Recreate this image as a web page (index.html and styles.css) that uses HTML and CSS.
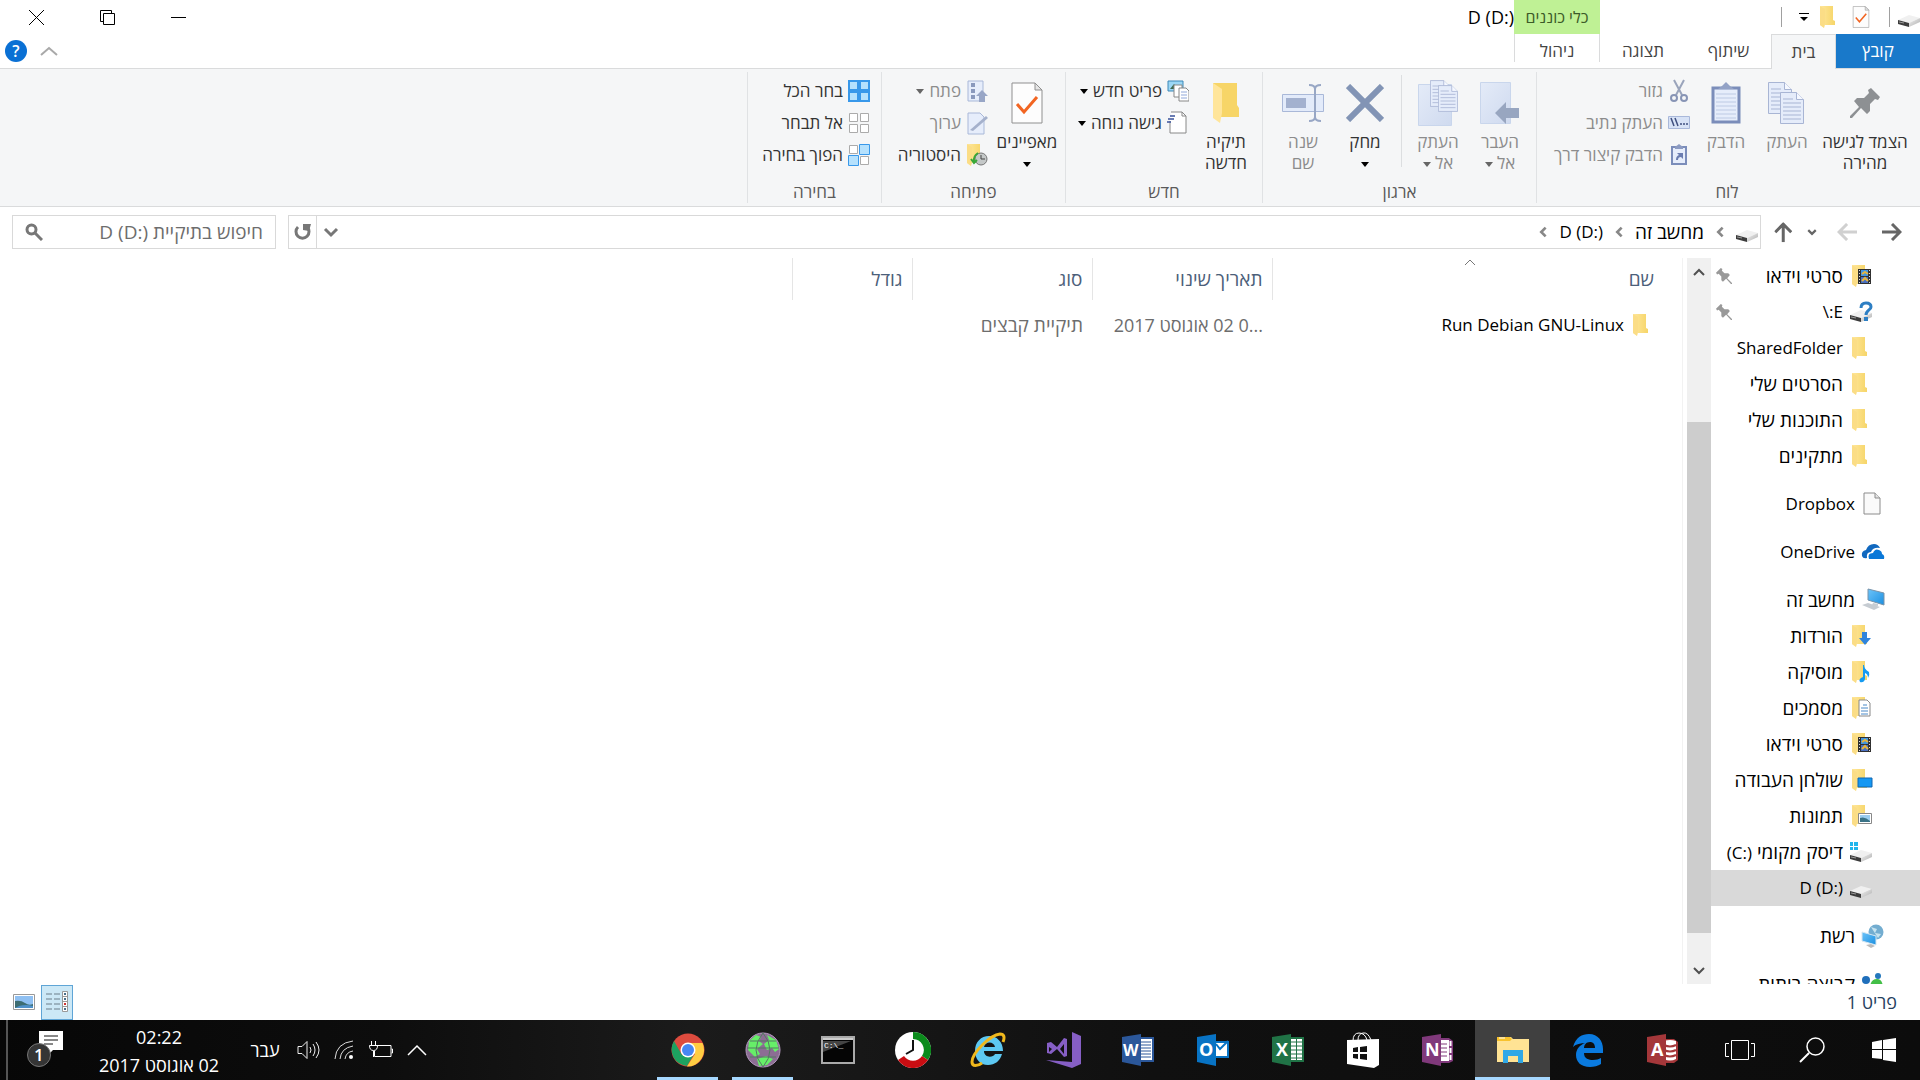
FILE: index.html
```html
<!DOCTYPE html>
<html lang="he" dir="rtl">
<head>
<meta charset="utf-8">
<title>D (D:)</title>
<link rel="stylesheet" href="styles.css">
</head>
<body>
<svg class="defs" aria-hidden="true">
  <defs>
    <linearGradient id="gf" x1="0" y1="0" x2="1" y2="0"><stop offset="0" stop-color="#ffe79c"/><stop offset="1" stop-color="#f6d568"/></linearGradient>
    <linearGradient id="gd" x1="0" y1="0" x2="1" y2="1"><stop offset="0" stop-color="#f2f2f2"/><stop offset="1" stop-color="#aeaeae"/></linearGradient>
    <linearGradient id="gl" x1="0" y1="0" x2="1" y2="1"><stop offset="0" stop-color="#e4ebf8"/><stop offset="1" stop-color="#cfdaef"/></linearGradient>
    <linearGradient id="gs" x1="0" y1="0" x2="1" y2="1"><stop offset="0" stop-color="#6cc4fa"/><stop offset="1" stop-color="#1c8fe0"/></linearGradient>
  </defs>
  <symbol id="folder" viewBox="0 0 24 24"><path d="M3 1h13v14l2 1v4H5z" fill="url(#gf)"/><path d="M3 1l5 4v13l-1 5-4-3z" fill="#fff0be"/><path d="M3 1l5 3v15l-1 4-4-3z" fill="#fbdd86"/></symbol>
  <symbol id="drive" viewBox="0 0 24 24"><path d="M1 15l11-5 11 3-11 5z" fill="#f0f0f0"/><path d="M12 18l11-5v4l-11 5z" fill="url(#gd)"/><path d="M1 15l11 3v4L1 19z" fill="#3c3c3c"/><path d="M2 17l5 1" stroke="#999"/></symbol>
  <symbol id="doc" viewBox="0 0 24 24"><path d="M3 1h11l5 5v16H3z" fill="#fafafa" stroke="#8c8c8c"/><path d="M14 1v5h5" fill="#e4e4e4" stroke="#8c8c8c"/></symbol>
  <symbol id="checkdoc" viewBox="0 0 32 42"><path d="M1 1h23l7 7v33H1z" fill="#fdfdfd" stroke="#8f8f8f"/><path d="M24 1v7h7z" fill="#e6e6e6" stroke="#8f8f8f"/><path d="M6 22l7 8 13-15" fill="none" stroke="#f26522" stroke-width="3"/></symbol>
  <symbol id="pin" viewBox="0 0 30 30"><path d="M21 0l9 9-2 3-3-1-5 5v7l-3 3-6-6L2 30l-2 0v-2l9-9-5-6 3-3h7l5-5-1-3z"/></symbol>
  <symbol id="page" viewBox="0 0 24 32"><path d="M.5.500h16l7 7v24h-23z" fill="#e5ecfa" stroke="#a8b5d4"/><path d="M16.500.5v7h7" fill="#f5f8ff" stroke="#a8b5d4"/><path d="M3 11h18M3 15h18M3 19h18M3 23h18M3 27h18M3 7h10" stroke="#a8b5d4"/></symbol>
  <symbol id="film" viewBox="0 0 24 24"><use href="#folder"/><path d="M9 5h13v15H9z" fill="#303030"/><path d="M12 6h7v6h-7z" fill="#4295df"/><path d="M12 13h7v6h-7z" fill="#496fc0"/><path d="M13 10l3-2 3 2M13 17l3-3 3 3" stroke="#e6b53d" fill="none" stroke-width="2"/><path d="M10.500 6v14M20.500 6v14" stroke="#ddd" stroke-dasharray="1 2"/></symbol>
  <symbol id="chev" viewBox="0 0 16 16"><path d="M3 5.500l5 5 5-5" fill="none" stroke="currentColor" stroke-width="3"/></symbol>
  <symbol id="chevl" viewBox="0 0 16 16"><path d="M11 3L6 8l5 5" fill="none" stroke="currentColor" stroke-width="3"/></symbol>
  <symbol id="tri" viewBox="0 0 8 5"><path d="M0 0h8L4 5z" fill="currentColor"/></symbol>
  <symbol id="arrow" viewBox="0 0 20 18"><path d="M0 9h18M10 1l8 8-8 8" fill="none" stroke="currentColor" stroke-width="3"/></symbol>
  <symbol id="sq" viewBox="0 0 22 22"><path d="M1 1h9v9H1zM12 1h9v9h-9zM1 12h9v9H1zM12 12h9v9h-9z"/></symbol>
</svg>

<header class="titlebar">
  <svg class="i24 cut"><use href="#drive"/></svg>
  <span class="tsep"></span>
  <button class="quick q1" aria-label="מאפיינים"><svg width="18" height="22"><use href="#checkdoc"/></svg></button>
  <button class="quick q2" aria-label="תיקיה חדשה"><svg class="i24"><use href="#folder"/></svg></button>
  <button class="quick q3" aria-label="התאמה אישית"><svg width="10" height="9" viewBox="0 0 10 9"><path d="M0 0h10v1H0zM1 4h8L5 8z"/></svg></button>
  <span class="tsep"></span>
  <span class="tool-tab">כלי כוננים</span>
  <h1 dir="ltr">D (D:)</h1>
  <div class="wincontrols">
    <button aria-label="מזער"><svg width="15" height="15"><path d="M0 7.500h15" stroke="#000"/></svg></button>
    <button aria-label="שחזר"><svg width="15" height="15"><path d="M3.500 3.500h11v11h-11zM3.500 11.500h-3V.500h11v3" fill="none" stroke="#000"/></svg></button>
    <button aria-label="סגור"><svg width="15" height="15"><path d="M0 0l15 15M15 0L0 15" stroke="#000"/></svg></button>
  </div>
</header>

<nav class="tabs">
  <button class="tab file">קובץ</button>
  <button class="tab home">בית</button>
  <button class="tab share">שיתוף</button>
  <button class="tab">תצוגה</button>
  <button class="tab manage">ניהול</button>
  <div class="tabtools">
    <button aria-label="מזער רצועת כלים"><svg width="18" height="10"><path d="M1 9l8-7 8 7" fill="none" stroke="#a9a9a9" stroke-width="2"/></svg></button>
    <button class="help" aria-label="עזרה">?</button>
  </div>
</nav>

<section class="ribbon">
  <div class="group clip">
    <div class="tools">
      <button class="big wide"><span class="pic"><svg width="30" height="30" fill="#8d9093"><use href="#pin"/></svg></span>הצמד לגישה<br>מהירה</button>
      <button class="big off"><span class="pic"><svg width="38" height="42"><use href="#page" width="24" height="32"/><use href="#page" x="12" y="10" width="24" height="32"/></svg></span>העתק</button>
      <button class="big off slim"><span class="pic"><svg width="30" height="43"><path d="M2 6h26v34H2z" fill="#e6edfb" stroke="#7b8dba" stroke-width="3"/><path d="M7 7l4-3 4-4 4 4 4 3z" fill="#93a2c6"/><path d="M5 12h20M5 16h20M5 20h20M5 24h20M5 28h20M5 32h20M5 36h20" stroke="#bdcae4"/></svg></span>הדבק</button>
      <div class="stack">
        <button class="small off"><svg width="22" height="24"><path d="M6 1l8 15M16 1L8 16" stroke="#9aa4bb" stroke-width="2"/><circle cx="6" cy="19" r="3" fill="none" stroke="#8794b5" stroke-width="2"/><circle cx="16" cy="19" r="3" fill="none" stroke="#8794b5" stroke-width="2"/></svg>גזור</button>
        <button class="small off"><svg width="22" height="24"><path d="M.500 5.500h21v12H.500z" fill="#d7e2f6" stroke="#a9b8da"/><path d="M3 7l3 8M7 7l3 8M12 13h2M15 13h2M18 13h2" stroke="#405080" stroke-width="1.500"/></svg>העתק נתיב</button>
        <button class="small off"><svg width="22" height="24"><path d="M4 4h14v17H4z" fill="#e6edfb" stroke="#7b8dba" stroke-width="2"/><path d="M7 4l4-3 4 3v2H7z" fill="#8c9bc2"/><path d="M8 17c0-3 1-4 3-5l-2-2h6v6l-2-2c-2 0-3 1-3 3z" fill="#6b7db0"/></svg>הדבק קיצור דרך</button>
      </div>
    </div>
    <h2>לוח</h2>
  </div>
  <div class="group org">
    <div class="tools">
      <button class="big off"><span class="pic"><svg width="40" height="44"><path d="M.500 1.500h30v41H.500z" fill="url(#gl)" stroke="#c9d6ec"/><path d="M15 32l11-11v6h13v10H26v6z" fill="#98a6c0"/></svg></span>העבר<br>אל <svg class="tri"><use href="#tri"/></svg></button>
      <button class="big off"><span class="pic"><svg width="40" height="46"><path d="M.500 4.500h33v41H.500z" fill="url(#gl)" stroke="#c9d6ec"/><use href="#page" x="12" y="0" width="20" height="27"/><use href="#page" x="20" y="5" width="20" height="27"/></svg></span>העתק<br>אל <svg class="tri"><use href="#tri"/></svg></button>
      <span class="rsep"></span>
      <button class="big"><span class="pic"><svg width="38" height="38"><path d="M2 2l34 34M36 2L2 36" stroke="#8294b5" stroke-width="6"/></svg></span>מחק<br><svg class="tri"><use href="#tri"/></svg></button>
      <button class="big off"><span class="pic"><svg width="42" height="38"><path d="M.500 10.500h41v17H.500z" fill="#e3ebfa" stroke="#a9b8d8"/><path d="M4 14h20v10H4z" fill="#a3b1cf"/><path d="M27 1q6 0 6 4v28q0 4-6 4M39 1q-6 0-6 4v28q0 4 6 4" fill="none" stroke="#98a7c5" stroke-width="2"/></svg></span>שנה<br>שם</button>
    </div>
    <h2>ארגון</h2>
  </div>
  <div class="group new">
    <div class="tools">
      <button class="big"><span class="pic"><svg width="28" height="40"><path d="M1 0h24v22l2 3v9H5z" fill="#f7d567"/><path d="M1 0l9 6v24l-2 10-7-5z" fill="#ffe59a"/></svg></span>תיקיה<br>חדשה</button>
      <div class="stack">
        <button class="small"><svg width="22" height="24"><path d="M1 2h15v10H1z" fill="#9bd7f5" stroke="#3c88b8"/><path d="M3 10l4-5 4 5z" fill="#406a50"/><path d="M7 6h8v12H7z" fill="#fff" stroke="#888"/><path d="M12 9h7l3 3v10H12z" fill="#fff" stroke="#888"/><path d="M14 13h6M14 16h6M14 19h6" stroke="#91a8da"/></svg>פריט חדש <svg class="tri"><use href="#tri"/></svg></button>
        <button class="small"><svg width="22" height="24"><path d="M4 1h11l4 4v17H3V10" fill="#fff" stroke="#888"/><path d="M15 1v4h4" fill="none" stroke="#888"/><path d="M3 5h5M1 8h6M0 11h4" stroke="#3b539c" stroke-width="1.500"/></svg>גישה נוחה <svg class="tri"><use href="#tri"/></svg></button>
      </div>
    </div>
    <h2>חדש</h2>
  </div>
  <div class="group open">
    <div class="tools">
      <button class="big props"><span class="pic"><svg width="32" height="42"><use href="#checkdoc"/></svg></span>מאפיינים<br><svg class="tri"><use href="#tri"/></svg></button>
      <div class="stack">
        <button class="small off"><svg width="22" height="24"><path d="M2 2h15v20H2z" fill="#e6edfb" stroke="#a9b8d8"/><path d="M5 4h4v4H5zM5 10h4v4H5zM5 16h4v4H5z" fill="#8a99bd"/><path d="M16 11l6 6h-3v6h-6v-6h-3z" fill="#98a6c6"/></svg>פתח <svg class="tri"><use href="#tri"/></svg></button>
        <button class="small off"><svg width="22" height="24"><path d="M2 2h12l4 4v17H2z" fill="#e6edfb" stroke="#a9b8d8"/><path d="M4 19L20 5l2 2L7 20z" fill="#a5b1cc"/></svg>ערוך</button>
        <button class="small"><svg width="22" height="24"><use href="#folder" width="24" height="24" x="-2"/><circle cx="15" cy="16" r="6" fill="#c4c8c8" stroke="#777"/><path d="M15 12v4h4" fill="none" stroke="#444"/><path d="M12 10q-5 3-4 9M5 16l3 4 3-3" stroke="#38a838" stroke-width="2" fill="none"/></svg>היסטוריה</button>
      </div>
    </div>
    <h2>פתיחה</h2>
  </div>
  <div class="group select">
    <div class="tools">
      <div class="stack">
        <button class="small"><svg width="22" height="22" fill="#b5e1fd" stroke="#3898ea" stroke-width="2"><use href="#sq"/></svg>בחר הכל</button>
        <button class="small"><svg width="22" height="22"><path d="M1.500 1.500h8v8h-8zM12.500 1.500h8v8h-8zM1.500 12.500h8v8h-8zM12.500 12.500h8v8h-8z" fill="#fff" stroke="#ababab"/></svg>אל תבחר</button>
        <button class="small"><svg width="22" height="22"><path d="M1.500 1.500h8v8h-8zM12.500 12.500h8v8h-8z" fill="#fff" stroke="#ababab"/><path d="M11.500.500h10v10h-10zM.500 11.500h10v10H.500z" fill="#b5e1fd" stroke="#3898ea"/></svg>הפוך בחירה</button>
      </div>
    </div>
    <h2>בחירה</h2>
  </div>
</section>

<div class="addressbar">
  <div class="navbtns">
    <button aria-label="הקודם" class="fwd"><svg width="20" height="18"><use href="#arrow"/></svg></button>
    <button aria-label="הבא" class="back"><svg width="20" height="18"><use href="#arrow"/></svg></button>
    <button aria-label="מיקומים אחרונים" class="recent"><svg width="12" height="12"><use href="#chev"/></svg></button>
    <button aria-label="למעלה" class="up"><svg width="20" height="18"><use href="#arrow"/></svg></button>
  </div>
  <div class="path">
    <svg class="i24"><use href="#drive"/></svg>
    <svg class="pc"><use href="#chevl"/></svg>
    <a href="#">מחשב זה</a>
    <svg class="pc"><use href="#chevl"/></svg>
    <a class="latin" href="#" dir="ltr">D (D:)</a>
    <svg class="pc"><use href="#chevl"/></svg>
    <span class="grow"></span>
    <button class="drop" aria-label="היסטוריית מיקומים"><svg width="18" height="18"><path d="M3 6l6 6 6-6" fill="none" stroke="#777" stroke-width="3"/></svg></button>
    <button class="refresh" aria-label="רענן"><svg width="18" height="18"><path d="M4 4a6.500 6.500 0 1 0 9 0" fill="none" stroke="#777" stroke-width="3"/><path d="M9 1h8l-2 7-6-1z" fill="#777"/></svg></button>
  </div>
  <div class="search">
    <input type="search" aria-label="חיפוש" placeholder="חיפוש בתיקיית D (D:)&#8206;">
    <svg width="18" height="18"><circle cx="6.500" cy="6.500" r="4.500" fill="none" stroke="#777" stroke-width="3"/><path d="M10 10l7 7" stroke="#777" stroke-width="3"/></svg>
  </div>
</div>

<main>
  <nav class="tree">
    <ul>
      <li><a class="kid" href="#"><svg><use href="#film"/></svg>סרטי וידאו<svg class="pinned"><use href="#pin"/></svg></a></li>
      <li><a class="kid latin" href="#"><svg viewBox="0 0 24 24"><use href="#drive"/><path d="M12 8q0-5 5-5t5 4c0 3-5 3-5 8" fill="none" stroke="#2d7fc4" stroke-width="3"/><path d="M15 17h4v4h-4z" fill="#2d7fc4"/></svg>E:\<svg class="pinned"><use href="#pin"/></svg></a></li>
      <li><a class="kid latin" href="#"><svg><use href="#folder"/></svg>SharedFolder</a></li>
      <li><a class="kid" href="#"><svg><use href="#folder"/></svg>הסרטים שלי</a></li>
      <li><a class="kid" href="#"><svg><use href="#folder"/></svg>התוכנות שלי</a></li>
      <li><a class="kid" href="#"><svg><use href="#folder"/></svg>מתקינים</a></li>
    </ul>
    <ul><li><a class="latin" href="#"><svg><use href="#doc"/></svg>Dropbox</a></li></ul>
    <ul><li><a class="latin" href="#"><svg viewBox="0 0 24 24"><path d="M1 16q-1-5 4-6 2-6 8-6 4 0 6 4-7-1-9 4-5 0-4 6-4 1-5-2z" fill="#1068bf"/><path d="M8 19q-2-6 4-6 2-5 6-3 3 1 3 4 3 1 2 5z" fill="#0a78d8"/></svg>OneDrive</a></li></ul>
    <ul>
      <li><a href="#"><svg viewBox="0 0 24 24"><path d="M7 1l16 4v12L7 12z" fill="url(#gs)" stroke="#7893aa"/><path d="M12 15l5 1v2l-6-1zM1 17l6-2 12 4-6 3z" fill="#c6ccd2"/></svg>מחשב זה</a></li>
      <li><a class="kid" href="#"><svg viewBox="0 0 24 24"><use href="#folder"/><path d="M13 8h5v6h4l-6 7-6-7h3z" fill="#2f84dc"/></svg>הורדות</a></li>
      <li><a class="kid" href="#"><svg viewBox="0 0 24 24"><use href="#folder"/><path d="M15 5q0 4 5 7 1 3-1 6 0-4-3-5v6q-1 4-5 3-2-3 3-5V5z" fill="#159bf1"/></svg>מוסיקה</a></li>
      <li><a class="kid" href="#"><svg viewBox="0 0 24 24"><use href="#folder"/><path d="M10 4h8l3 3v13H10z" fill="#fff" stroke="#888"/><path d="M12 12h7M12 15h7M12 18h7M14 9h4" stroke="#4a8ac8"/></svg>מסמכים</a></li>
      <li><a class="kid" href="#"><svg><use href="#film"/></svg>סרטי וידאו</a></li>
      <li><a class="kid" href="#"><svg viewBox="0 0 24 24"><use href="#folder"/><path d="M9 10h14v9H9z" fill="#1598f3" stroke="#1166b1"/></svg>שולחן העבודה</a></li>
      <li><a class="kid" href="#"><svg viewBox="0 0 24 24"><use href="#folder"/><path d="M9.500 9.500h13v10h-13z" fill="#fff" stroke="#888"/><path d="M11 11h10v7H11z" fill="#9bcdf0"/><path d="M11 14q5-2 10 3v1H11z" fill="#397286"/></svg>תמונות</a></li>
      <li><a class="kid" href="#"><svg viewBox="0 0 24 24"><use href="#drive"/><path d="M1 2h3v4H1zM5 2h4v4H5zM1 7h3v3H1zM5 7h4v3H5z" fill="#21b5ec"/></svg><span>דיסק מקומי <bdi class="latin" dir="ltr">(C:)</bdi></span></a></li>
      <li><a class="kid latin current" href="#"><svg><use href="#drive"/></svg><bdi dir="ltr">D (D:)</bdi></a></li>
    </ul>
    <ul><li><a href="#"><svg viewBox="0 0 24 24"><circle cx="15" cy="8" r="7.500" fill="#73add0"/><path d="M10 3l6 2-2 4 6 1-3 4" fill="#c6e3ef"/><path d="M1 8l14 4v9L1 17z" fill="url(#gs)" stroke="#d4e6f2"/><path d="M5 21l5-1 4 2-4 2z" fill="#bbb"/></svg>רשת</a></li></ul>
    <ul><li><a href="#"><svg viewBox="0 0 24 24"><circle cx="5" cy="8" r="4" fill="#1f6fbb"/><circle cx="17" cy="4" r="3" fill="#2478bd"/><path d="M9 17q0-10 7-10 6 0 6 10z" fill="#43bf47"/></svg>קבוצה ביתית</a></li></ul>
  </nav>
  <div class="scroll">
    <button aria-label="גלול למעלה"><svg width="12" height="9"><path d="M1 8l5-5 5 5" fill="none" stroke="#505050" stroke-width="2"/></svg></button>
    <span class="before"></span><span class="thumb"></span><span class="after"></span>
    <button aria-label="גלול למטה"><svg width="12" height="9"><path d="M1 1l5 5 5-5" fill="none" stroke="#505050" stroke-width="2"/></svg></button>
  </div>
  <section class="files">
    <table>
      <thead><tr>
        <th class="c-name">שם<svg class="sort" width="12" height="7"><path d="M1 6l5-5 5 5" fill="none" stroke="#777"/></svg></th>
        <th class="c-date">תאריך שינוי</th><th class="c-type">סוג</th><th class="c-size">גודל</th><th></th>
      </tr></thead>
      <tbody><tr>
        <td><a class="entry latin" href="#"><svg class="i24"><use href="#folder"/></svg><span dir="ltr">Run Debian GNU-Linux</span></a></td>
        <td class="date">...0 02 אוגוסט 2017</td><td>תיקיית קבצים</td><td></td><td></td>
      </tr></tbody>
    </table>
  </section>
</main>

<div class="status">
  <span>פריט 1</span>
  <div class="views">
    <button class="on" aria-label="פרטים"><svg width="22" height="22"><path d="M0 3h6M8 3h6M0 8h6M8 8h6M0 13h6M8 13h6M0 18h6M8 18h6" stroke="#6c7f8a"/><path d="M16.500.500h5v20h-5zM16 5.500h5M16 10.500h5M16 15.500h5" stroke="#999" fill="#fff"/><path d="M18 2h2v2h-2zM18 7h2v2h-2zM18 17h2v2h-2z" fill="#46708c"/><path d="M18 12h2v2h-2z" fill="#c33"/></svg></button>
    <button aria-label="תמונות ממוזערות"><svg width="22" height="16"><path d="M.500.500h21v15H.500z" fill="#fff" stroke="#999"/><path d="M2 2h18v12H2z" fill="#8fc0f2"/><path d="M2 7q6-1 10 2t8 1v4H2z" fill="#3d6d72"/><path d="M6 12q7-2 14 0v2H2z" fill="#4f91c9"/></svg></button>
  </div>
</div>

<footer class="taskbar">
  <button class="sys" aria-label="התחל"><svg width="24" height="24"><path d="M0 4l10-2v9H0zM11 2l13-2v11H11zM0 12h10v9L0 20zM11 12h13v12l-13-2z" fill="#fff"/></svg></button>
  <button class="sys" aria-label="חיפוש"><svg width="26" height="26"><circle cx="16.500" cy="9.500" r="8.500" fill="none" stroke="#fff" stroke-width="1.500"/><path d="M10 16L1 25" stroke="#fff" stroke-width="2"/></svg></button>
  <button class="sys" aria-label="תצוגת משימות"><svg width="30" height="20"><path d="M6.500.500h17v19h-17zM4 3.500H.500v13H4M26 3.500h3.500v13H26" fill="none" stroke="#fff"/></svg></button>
  <div class="apps">
    <button class="app" aria-label="Access"><svg width="34" height="34"><path d="M16 6h12l4 3v18l-4 3H16z" fill="#a4373a"/><path d="M18 8q6-2 12 0v18q-6 3-12 0z" fill="#fff"/><path d="M18 12q6 3 12 0M18 17q6 3 12 0M18 22q6 3 12 0" stroke="#a4373a" stroke-width="2" fill="none"/><path d="M1 4l19-3v32L1 29z" fill="#a4373a"/><text x="5" y="23">A</text></svg></button>
    <button class="app" aria-label="Edge"><svg width="32" height="34"><path d="M1 14C4 4 10 1 17 1c9 0 14 7 14 15v4H12c0 6 5 7 9 7 3 0 6-1 8-2v6c-3 2-7 3-11 3-9 0-14-5-14-12 0-6 4-10 9-12-4 0-9 1-12 4zm11 1h11c0-4-2-6-5-6-4 0-6 3-6 6z" fill="#0a7adf"/></svg></button>
    <button class="app active" aria-label="סייר הקבצים"><svg width="32" height="28"><path d="M0 1h14l2 2h16v23H0z" fill="#ffe394"/><path d="M0 1h13l2 2-2 2H0z" fill="#f8c22c"/><path d="M2 2h6" stroke="#fff"/><path d="M6 14h20v13h-5v-7H11v7H6z" fill="#30a8e6"/></svg></button>
    <button class="app" aria-label="OneNote"><svg width="34" height="34"><path d="M16 5h12l4 3v20l-4 2H16z" fill="#80397b"/><path d="M20 7h8v21h-8z" fill="#fff"/><path d="M20 11h6M20 15h6M20 19h6M20 23h6" stroke="#80397b"/><path d="M29.500 8v5M29.500 15v5M29.500 22v5" stroke="#fff" stroke-width="2"/><path d="M1 4l19-3v32L1 29z" fill="#80397b"/><text x="4" y="23">N</text></svg></button>
    <button class="app" aria-label="חנות"><svg width="32" height="36"><path d="M0 8l32-1v26l-5 3-27-4z" fill="#fff"/><path d="M6 9q0-8 6-8t8 7M11 8q0-6 5-7t8 7" fill="none" stroke="#fff"/><path d="M6 16l5-1v5H6zM13 15l7-1v6h-7zM6 22h5v5l-5-1zM13 22h7v6l-7-1z" fill="#111"/></svg></button>
    <button class="app" aria-label="Excel"><svg width="34" height="34"><path d="M17 5h15v23H17z" fill="#fff" stroke="#207346" stroke-width="2"/><path d="M25.500 5v23M18 9h14M18 13h14M18 17h14M18 21h14M18 25h14" stroke="#207346"/><path d="M1 4l19-3v32L1 29z" fill="#207346"/><text x="5" y="23">X</text></svg></button>
    <button class="app" aria-label="Outlook"><svg width="34" height="34"><path d="M17 9h15v15H17z" fill="#fff" stroke="#0873c4" stroke-width="2"/><path d="M20 11l4 5 8-8" fill="none" stroke="#0873c4" stroke-width="2"/><path d="M1 4l19-3v32L1 29z" fill="#0873c4"/><text x="3" y="23">O</text></svg></button>
    <button class="app" aria-label="Word"><svg width="34" height="34"><path d="M17 5h15v23H17z" fill="#fff" stroke="#2b579a" stroke-width="2"/><path d="M20 9h10M20 12h10M20 15h10M20 18h10M20 21h10M20 24h10" stroke="#2b579a"/><path d="M1 4l19-3v32L1 29z" fill="#2b579a"/><text class="w" x="2" y="23">W</text></svg></button>
    <button class="app" aria-label="Visual Studio"><svg width="36" height="36"><path d="M27 0l9 4v28l-9 4L1 28l26 2z" fill="#865fc5"/><path fill-rule="evenodd" d="M2 11l4-1 6 5 7-9 3 1v17l-3 1-7-8-6 5-4-1V11zm2 4v5l3-3zm15-3l-4 5 4 5z" fill="#865fc5"/></svg></button>
    <button class="app" aria-label="Internet Explorer"><svg width="36" height="36"><path d="M19 4c8 0 14 6 14 15H14c0 7 9 7 11 3h7c-2 7-7 11-14 11C10 33 5 27 5 19 5 10 11 4 19 4zm-5 11h11c-1-6-10-6-11 0z" fill="#5dc8f2"/><path d="M33 10c2-5 1-8-3-8C20 3 2 21 2 30c0 5 6 4 10 1" fill="none" stroke="#f0b81c" stroke-width="3"/></svg></button>
    <button class="app" aria-label="שעון"><svg width="36" height="36"><circle cx="18" cy="18" r="18" fill="#fff"/><path d="M18 0a18 18 0 0 1 15 28l-6-4A11 11 0 0 0 18 7z" fill="#0a8b1b"/><path d="M3 28a18 18 0 0 0 30 0l-6-4a11 11 0 0 1-18 0z" fill="#c90d12"/><path d="M18 8v10l-7 4" fill="none" stroke="#111" stroke-width="2"/></svg></button>
    <button class="app" aria-label="שורת פקודה"><svg width="34" height="28"><path d="M1 1h32v26H1z" fill="#050505" stroke="#aaa" stroke-width="2"/><path d="M2 3h30" stroke="#ccc" stroke-width="2"/><path d="M2 5h28L2 16z" fill="#444"/><text class="cmd" x="3" y="12">C:\_</text></svg></button>
    <button class="app run" aria-label="דפדפן"><svg width="36" height="36"><circle cx="18" cy="18" r="17" fill="#8c6d94" stroke="#b69ac0"/><path d="M4 9l7-6 5 2-2 4 4 3-6 5 3 5-5 3-7-7zM22 3l9 5 3 9-4 3-3-4-5 2-3-6 5-4zM12 27l9-3 7 3-6 6-8 1z" fill="#66ef68"/><path d="M2 16h32M5 9h26M5 25h26M18 1q-14 17 0 34M18 1q14 17 0 34" fill="none" stroke="#557a62"/></svg></button>
    <button class="app run" aria-label="Chrome"><svg width="34" height="34"><circle cx="17" cy="17" r="16.500" fill="#dd4b3e"/><path d="M3 8a16.500 16.500 0 0 0 13 25l7-12-12 1z" fill="#1da260"/><path d="M16 33.500A16.500 16.500 0 0 0 31.500 10H17l7 11z" fill="#ffcd42"/><circle cx="17" cy="17" r="7.500" fill="#fff"/><circle cx="17" cy="17" r="6" fill="#4687f4"/></svg></button>
  </div>
  <span class="grow"></span>
  <div class="tray">
    <button aria-label="הצג סמלים מוסתרים"><svg width="20" height="12"><path d="M1 11l9-9 9 9" fill="none" stroke="#fff" stroke-width="1.500"/></svg></button>
    <button aria-label="סוללה"><svg width="26" height="18"><path d="M9 4.500h14v11H6.500V10M23.500 8h1v4h-1M3.500 0v4M7.500 0v4M1.500 4.500h8q0 5-4 5t-4-5M5.500 10v6" fill="none" stroke="#fff"/></svg></button>
    <button aria-label="רשת אלחוטית"><svg width="22" height="20"><path d="M1 19Q2 3 19 1M6 19Q7 8 19 6M11 19q1-7 8-8" fill="none" stroke="#ddd"/><circle cx="17" cy="17" r="2" fill="#fff"/></svg></button>
    <button aria-label="עוצמת קול"><svg width="24" height="20"><path d="M1 6.500h4l5-5v17l-5-5H1zM13 7q2 3 0 6M16 4q4 6 0 12M19 2q6 8 0 16" fill="none" stroke="#eee"/></svg></button>
    <button class="lang">עבר</button>
  </div>
  <button class="clock"><time>02:22</time><span>02 אוגוסט 2017</span></button>
  <button class="action" aria-label="מרכז הפעולות"><svg width="36" height="38"><path d="M12 0h24v19H26l-6 6v-6h-8z" fill="#fff"/><path d="M17 5h14M17 9h14M17 13h9" stroke="#111"/><circle cx="12" cy="24" r="11.500" fill="#353535" stroke="#777"/><text class="badge" x="7" y="30">1</text></svg></button>
  <span class="peek"></span>
</footer>
</body>
</html>
```

FILE: styles.css
```css
* { box-sizing: border-box; }
html, body { height: 100%; }
body {
  margin: 0;
  display: flex;
  flex-direction: column;
  background: #fff;
  color: #000;
  font: 19px/24px "Open Sans", "Noto Sans", sans-serif;
  overflow: hidden;
}
button {
  margin: 0;
  padding: 0;
  border: 0;
  background: none;
  color: inherit;
  font: inherit;
}
a { color: inherit; text-decoration: none; }
h1, h2 { margin: 0; font-weight: 400; }
ul { margin: 0; padding: 0; list-style: none; }
svg { flex: none; display: block; }
.defs { position: absolute; width: 0; height: 0; }
.i24 { width: 24px; height: 24px; }
.grow { flex: 1; }
.latin { font-size: 17px; }

/* title bar */
.titlebar { display: flex; align-items: center; height: 34px; flex: none; }
.titlebar .cut { margin-inline-end: 7px; margin-inline-start: -1px; }
.tsep { width: 1px; height: 20px; background: #a0a0a0; }
.quick { display: flex; align-items: center; justify-content: center; }
.q1 { width: 56px; }
.q2 { width: 8px; }
.q3 { width: 43px; }
.tool-tab {
  width: 86px;
  height: 34px;
  margin-inline-start: 181px;
  background: #bff195;
  color: #3c5a28;
  font-size: 16px;
  line-height: 34px;
  text-align: center;
}
.titlebar h1 { margin-inline-start: 2px; font-size: 18px; }
.wincontrols { display: flex; margin-inline-start: auto; padding-inline-end: 1px; }
.wincontrols button { width: 71px; height: 34px; display: flex; align-items: center; justify-content: center; }

/* ribbon tabs */
.tabs { display: flex; height: 35px; flex: none; border-bottom: 1px solid #dadbdc; }
.tab { width: 86px; height: 34px; font-size: 17px; color: #444; }
.tab.file { width: 84px; background: #1979ca; color: #fff; }
.tab.home { width: 65px; height: 35px; background: #f5f6f7; border: 1px solid #dadbdc; border-bottom: 0; }
.tab.share { width: 85px; }
.tab.manage { border-inline: 1px solid #dadbdc; height: 28px; padding-top: 5px; }
.tabtools { display: flex; align-items: center; gap: 13px; margin-inline-start: auto; padding-inline-end: 5px; }
.help { width: 22px; height: 22px; border-radius: 50%; background: #0a70d4; color: #fff; font-size: 16px; font-weight: 600; line-height: 22px; }

/* ribbon */
.ribbon { display: flex; height: 138px; flex: none; background: #f5f6f7; border-bottom: 1px solid #dadbdc; padding: 3px 0; }
.group { display: flex; flex-direction: column; border-inline-end: 1px solid #e0e2e4; padding: 3px 5px 0; }
.clip { width: 384px; padding-inline-start: 8px; }
.org { width: 274px; }
.new { width: 197px; }
.open { width: 184px; }
.select { width: 134px; }
.tools { display: flex; height: 107px; align-items: flex-start; }
.group h2 { font-size: 17px; line-height: 20px; color: #5a5a5a; text-align: center; }
.big { width: 62px; font-size: 17px; line-height: 21px; color: #333; white-space: nowrap; }
.big.wide { width: 94px; }
.big.slim { width: 60px; }
.big.props { width: 66px; }
.pic { display: flex; align-items: center; justify-content: center; height: 56px; }
.big.off, .small.off { color: #8c8c8c; }
.tri { display: inline-block; width: 8px; height: 5px; vertical-align: middle; color: #000; }
.off .tri { color: #666; }
.rsep { width: 1px; height: 92px; margin: 0 5px; background: #dcdee0; }
.stack { display: flex; flex-direction: column; padding-inline-start: 6px; }
.small { display: flex; align-items: center; gap: 5px; height: 32px; font-size: 17px; color: #333; white-space: nowrap; }

/* address bar */
.addressbar { display: flex; align-items: center; height: 50px; flex: none; padding: 0 12px; }
.navbtns { display: flex; align-items: center; width: 147px; color: #666; }
.navbtns button { display: flex; justify-content: center; width: 34px; }
.navbtns .back { width: 58px; color: #d0d0d0; transform: scaleX(-1); }
.navbtns .recent { width: 14px; }
.navbtns .up { width: 46px; transform: rotate(-90deg); }
.path { display: flex; align-items: center; flex: 1; height: 34px; border: 1px solid #d9d9d9; padding-inline-start: 1px; }
.path .pc { width: 14px; height: 14px; margin: 0 9px; color: #888; }
.path .i24 { margin-inline-end: -1px; }
.drop, .refresh { display: flex; align-items: center; justify-content: center; width: 28px; height: 32px; }
.refresh { border-inline-start: 1px solid #d9d9d9; }
.search { display: flex; align-items: center; width: 264px; height: 34px; margin-inline-start: 12px; padding: 0 12px; border: 1px solid #d9d9d9; }
.search input { flex: 1; min-width: 0; border: 0; padding: 0; outline: 0; background: none; font: inherit; }
.search input::placeholder { color: #6d6d6d; opacity: 1; }

/* content */
main { display: flex; flex: 1; min-height: 0; padding-top: 1px; }
.tree { width: 209px; overflow: hidden; }
.tree ul { margin-bottom: 12px; }
.tree a { display: flex; align-items: center; gap: 6px; height: 36px; padding-inline-start: 35px; white-space: nowrap; }
.tree a.kid { padding-inline-start: 47px; }
.tree a.current { background: #d9d9d9; }
.tree svg { width: 24px; height: 24px; }
.tree svg.pinned { width: 16px; height: 16px; margin-inline-start: auto; margin-inline-end: 5px; fill: #999; transform: scaleX(-1); }
.scroll { display: flex; flex-direction: column; width: 24px; background: #f0f0f0; }
.scroll button { display: flex; align-items: center; justify-content: center; height: 26px; }
.scroll .before { flex: 138; }
.scroll .thumb { flex: 511; background: #cdcdcd; }
.scroll .after { flex: 25; }
.files { flex: 1; margin-inline-start: 4px; border-inline-start: 1px solid #f2f2f2; padding-inline-start: 19px; }
table { width: 100%; table-layout: fixed; border-collapse: collapse; }
th { position: relative; height: 42px; padding: 0 9px; border-inline-end: 1px solid #e5e5e5; font-weight: 400; text-align: start; color: #4c607a; }
th:last-child { border: 0; }
td { height: 50px; padding: 0 9px; color: #6d6d6d; white-space: nowrap; }
td.date { font-size: 18px; }
.c-name { width: 391px; }
.c-date, .c-type { width: 180px; }
.c-size { width: 120px; }
.sort { position: absolute; top: 1px; left: 49%; }
.entry { display: flex; align-items: center; gap: 6px; color: #000; }

/* status bar */
.status { display: flex; justify-content: space-between; align-items: center; height: 36px; flex: none; padding-inline: 23px 13px; color: #26415f; font-size: 18px; }
.views { display: flex; align-items: center; gap: 6px; }
.views .on { display: flex; align-items: center; justify-content: center; width: 32px; height: 35px; background: #cce8f6; border: 1px solid #5fa5d6; }

/* taskbar */
.taskbar { display: flex; height: 60px; flex: none; color: #fff; background: linear-gradient(90deg, #070707, #0d0d0d 20%, #1b1b1b 36%, #101010 60%, #0c0c0c); }
.sys, .app { display: flex; align-items: center; justify-content: center; width: 72px; }
.apps { display: flex; margin-inline-start: 4px; }
.app { width: 75px; }
.app text { fill: #fff; font: 700 18px "Open Sans", sans-serif; }
.app text.w { font-size: 16px; }
.app text.cmd { font: 8px "Liberation Mono", monospace; }
.taskbar svg { direction: ltr; }
.active { background: #404040; border-bottom: 3px solid #a6d8ff; padding-top: 3px; }
.run { width: 61px; margin-inline: 7px; border-bottom: 3px solid #a6d8ff; padding-top: 3px; }
.tray { display: flex; }
.tray button { display: flex; align-items: center; justify-content: center; width: 36px; }
.tray .lang { width: 52px; font-size: 18px; }
.clock { width: 158px; margin-inline-start: 1px; padding-top: 2px; font-size: 18px; line-height: 28px; text-align: center; }
.clock time, .clock span { display: block; }
.action { display: flex; align-items: center; width: 72px; padding-inline-start: 17px; }
.action .badge { fill: #fff; font: 600 17px "Open Sans", sans-serif; }
.peek { width: 8px; border-inline-start: 2px solid #555; }
```
